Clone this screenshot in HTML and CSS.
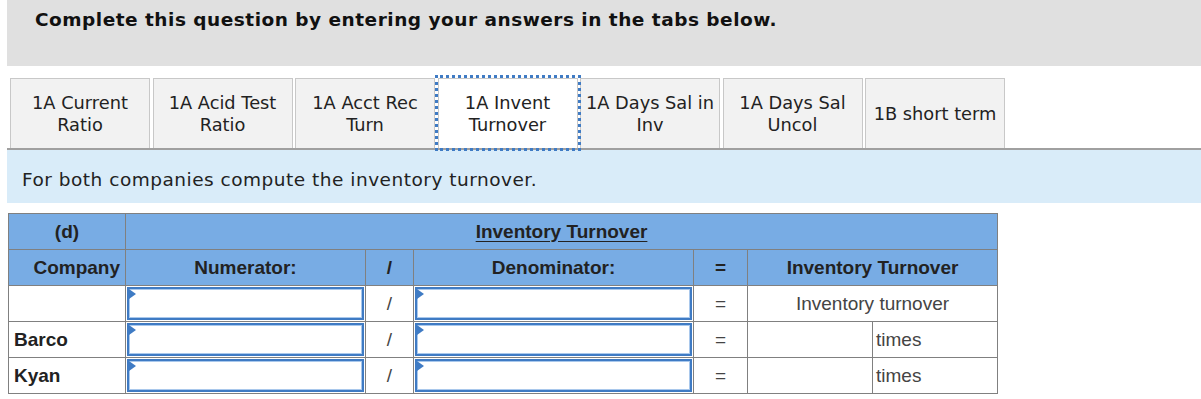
FILE: index.html
```html
<!DOCTYPE html>
<html>
<head>
<meta charset="utf-8">
<link rel="stylesheet" href="styles.css">
</head>
<body>
<div class="page">
  <div class="banner">Complete this question by entering your answers in the tabs below.</div>
  <div class="tabs">
    <div class="tab">1A Current<br>Ratio</div>
    <div class="tab">1A Acid Test<br>Ratio</div>
    <div class="tab">1A Acct Rec<br>Turn</div>
    <div class="tab active">1A Invent<br>Turnover</div>
    <div class="tab">1A Days Sal in<br>Inv</div>
    <div class="tab">1A Days Sal<br>Uncol</div>
    <div class="tab">1B short term</div>
  </div>
  <div class="prompt">For both companies compute the inventory turnover.</div>
  <table class="grid">
    <colgroup>
      <col class="c-co"><col class="c-num"><col class="c-op"><col class="c-den"><col class="c-eq"><col class="c-r1"><col class="c-r2">
    </colgroup>
    <tr class="head">
      <th>(d)</th>
      <th colspan="6" class="title"><u>Inventory Turnover</u></th>
    </tr>
    <tr class="head">
      <th class="right">Company</th>
      <th>Numerator:</th>
      <th>/</th>
      <th>Denominator:</th>
      <th>=</th>
      <th colspan="2">Inventory Turnover</th>
    </tr>
    <tr>
      <td></td>
      <td class="inp"><div class="field"></div></td>
      <td class="op">/</td>
      <td class="inp"><div class="field"></div></td>
      <td class="op">=</td>
      <td colspan="2" class="center">Inventory turnover</td>
    </tr>
    <tr>
      <td class="co">Barco</td>
      <td class="inp"><div class="field"></div></td>
      <td class="op">/</td>
      <td class="inp"><div class="field"></div></td>
      <td class="op">=</td>
      <td></td>
      <td class="unit">times</td>
    </tr>
    <tr>
      <td class="co">Kyan</td>
      <td class="inp"><div class="field"></div></td>
      <td class="op">/</td>
      <td class="inp"><div class="field"></div></td>
      <td class="op">=</td>
      <td></td>
      <td class="unit">times</td>
    </tr>
  </table>
</div>
</body>
</html>
```
FILE: styles.css
```css
html, body {
  margin: 0;
  padding: 0;
  background: #fff;
}
.page {
  padding-left: 7px;
  font-family: "DejaVu Sans", Verdana, sans-serif;
  color: #222;
}
.banner {
  background: #e0e0e0;
  height: 66px;
  box-sizing: border-box;
  padding: 9px 0 0 28px;
  font-weight: bold;
  font-size: 18.5px;
  letter-spacing: 0.5px;
  line-height: 22px;
  color: #111;
}
.tabs {
  display: flex;
  gap: 2.5px;
  margin-top: 12px;
  padding-left: 3px;
  border-bottom: 2px solid #a0a0a0;
  height: 70px;
  box-sizing: content-box;
}
.tab {
  width: 140px;
  flex: none;
  box-sizing: border-box;
  height: 70px;
  background: #f2f2f2;
  border: 1px solid #c8c8c8;
  border-bottom: none;
  display: flex;
  align-items: center;
  justify-content: center;
  text-align: center;
  font-size: 17.8px;
  line-height: 22px;
  color: #222;
  white-space: nowrap;
}
.tab.active {
  background: #fff;
  outline: 3px dotted #3f7bc4;
  outline-offset: 0px;
  position: relative;
  z-index: 1;
}
.prompt {
  background: #d9ecf9;
  height: 53px;
  box-sizing: border-box;
  padding: 19px 0 0 15px;
  font-size: 18.5px;
  letter-spacing: 0.5px;
  line-height: 22px;
  color: #222;
}
.grid {
  margin-top: 10px;
  margin-left: 1px;
  border-collapse: collapse;
  font-family: "Liberation Sans", Arial, sans-serif;
  font-size: 19px;
  color: #333;
  table-layout: fixed;
  width: 989px;
}
.c-co { width: 117px; }
.c-num { width: 240px; }
.c-op { width: 48px; }
.c-den { width: 280px; }
.c-eq { width: 54px; }
.c-r1 { width: 125px; }
.c-r2 { width: 125px; }
.grid th, .grid td {
  border: 1px solid #808080;
  height: 36px;
  padding: 0;
  box-sizing: border-box;
}
.grid tr.head th {
  background: #78ace4;
  color: #222;
  font-weight: bold;
  text-align: center;
}
.grid tr.head th.right { text-align: right; padding-right: 5px; }
.grid .title u { text-underline-offset: 3px; }
.grid td.op, .grid td.center { text-align: center; color: #444; }
.grid td.co { font-weight: bold; color: #222; padding-left: 5px; }
.grid td.unit { padding-left: 3px; color: #444; }
.grid td.inp { padding: 1px; }
.field {
  position: relative;
  height: 33px;
  box-sizing: border-box;
  border: 2px solid #3f7bc4;
  box-shadow: inset 0 0 0 1px #a9c8ec;
  background: #fff;
}
.field::before {
  content: "";
  position: absolute;
  left: 0;
  top: 0;
  border-top: 5px solid transparent;
  border-bottom: 5px solid transparent;
  border-left: 7px solid #3f7bc4;
}
```
